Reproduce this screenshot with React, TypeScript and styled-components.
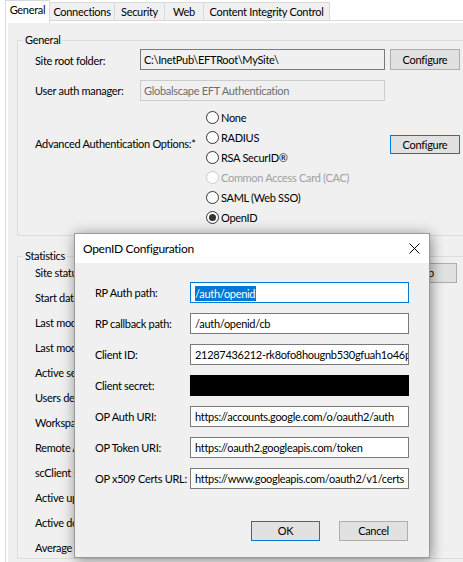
import React from "react";
import styled, { createGlobalStyle, css } from "styled-components";

const GlobalStyle = createGlobalStyle`
  html, body { margin: 0; padding: 0; background: #ffffff; }
  body { font-family: Lato, "Noto Sans", sans-serif; font-size: 11px; color: #000; }
  * { box-sizing: border-box; }
`;

const FONT = `Lato, "Noto Sans", "Liberation Sans", sans-serif`;

const Screen = styled.div`
  position: relative;
  width: 463px;
  height: 562px;
  overflow: hidden;
  background: #ffffff;
  font-family: ${FONT};
  font-size: 11px;
  letter-spacing: -0.3px;
  color: #000;
`;

const TabStrip = styled.div`
  display: flex;
  align-items: flex-end;
  height: 20px;
  padding-left: 5px;
  position: relative;
  z-index: 1;
`;

const Tab = styled.div<{ $active?: boolean; $w: number }>`
  width: ${(p) => p.$w}px;
  height: ${(p) => (p.$active ? 23 : 18)}px;
  margin-bottom: ${(p) => (p.$active ? -3 : 0)}px;
  margin-right: -1px;
  border: 1px solid #d9d9d9;
  border-bottom: none;
  background: ${(p) => (p.$active ? "#ffffff" : "#f0f0f0")};
  display: flex;
  justify-content: center;
  align-items: center;
  padding-bottom: ${(p) => (p.$active ? 4 : 0)}px;
  white-space: nowrap;
  line-height: 16px;
`;

const Panel = styled.div`
  margin-left: 5px;
  width: 620px;
  height: 560px;
  border: 1px solid #d9d9d9;
  padding: 2px;
  background: #ffffff;
`;

const Page = styled.div`
  background: #f0f0f0;
  height: 100%;
  padding: 9px 0 0 9px;
  display: flex;
  flex-direction: column;
`;

const Group = styled.fieldset<{ $gap?: number }>`
  margin: ${(p) => p.$gap ?? 0}px 0 0 0;
  padding: 0 0 0 17px;
  border: 1px solid #dcdcdc;
  width: 600px;
  min-width: 0;
`;

const Legend = styled.legend`
  margin-left: -12px;
  padding: 0 2px;
  line-height: 16px;
  font-size: 11px;
`;

const Row = styled.div<{ $mt: number }>`
  display: flex;
  align-items: center;
  height: 21px;
  margin-top: ${(p) => p.$mt}px;
`;

const Label = styled.div<{ $w: number; $dy?: number }>`
  width: ${(p) => p.$w}px;
  flex: none;
  white-space: nowrap;
  line-height: 16px;
  padding-top: ${(p) => p.$dy ?? 0}px;
`;

type FieldKind = "readonly" | "disabled" | "normal" | "focused" | "secret";

const Field = styled.div<{ $w: number; $kind: FieldKind; $pad?: number }>`
  width: ${(p) => p.$w}px;
  height: 21px;
  flex: none;
  border: 1px solid #7a7a7a;
  background: #ffffff;
  padding: 0 ${(p) => p.$pad ?? 3}px;
  line-height: 19px;
  white-space: nowrap;
  overflow: hidden;
  ${(p) =>
    p.$kind === "readonly" &&
    css`
      background: #f0f0f0;
    `}
  ${(p) =>
    p.$kind === "disabled" &&
    css`
      background: #f0f0f0;
      border-color: #cccccc;
      color: #6d6d6d;
    `}
  ${(p) =>
    p.$kind === "focused" &&
    css`
      border-color: #0078d7;
    `}
  ${(p) =>
    p.$kind === "secret" &&
    css`
      background: #000000;
      border-color: #000000;
    `}
`;

const Selected = styled.span`
  display: inline-block;
  background: #0078d7;
  color: #ffffff;
  line-height: 15px;
  padding: 0 1px 0 0;
  vertical-align: middle;
  margin-top: -2px;
`;

const Button = styled.div<{ $w: number; $default?: boolean; $h?: number }>`
  width: ${(p) => p.$w}px;
  height: ${(p) => p.$h ?? 21}px;
  flex: none;
  border: 1px solid ${(p) => (p.$default ? "#0078d7" : "#adadad")};
  background: #e1e1e1;
  display: flex;
  align-items: center;
  justify-content: center;
  white-space: nowrap;
  line-height: 16px;
`;

const Spacer = styled.div<{ $w: number }>`
  width: ${(p) => p.$w}px;
  flex: none;
`;

const AuthBlock = styled.div`
  display: grid;
  grid-template-columns: 171px 184px 70px;
  margin-top: 6px;
  padding-bottom: 8px;
`;

const AuthLabel = styled.div`
  margin-top: 29px;
  line-height: 16px;
  white-space: nowrap;
`;

const RadioList = styled.div`
  display: flex;
  flex-direction: column;
`;

const RadioRow = styled.div<{ $disabled?: boolean }>`
  display: flex;
  align-items: center;
  height: 20px;
  gap: 2px;
  white-space: nowrap;
  color: ${(p) => (p.$disabled ? "#a0a0a0" : "#000")};
`;

const RadioCircle = styled.span<{ $checked?: boolean; $disabled?: boolean }>`
  width: 13px;
  height: 13px;
  flex: none;
  border-radius: 50%;
  border: 1px solid ${(p) => (p.$disabled ? "#cccccc" : "#333333")};
  background: #ffffff;
  display: flex;
  align-items: center;
  justify-content: center;
  &::after {
    content: "";
    display: ${(p) => (p.$checked ? "block" : "none")};
    width: 7px;
    height: 7px;
    border-radius: 50%;
    background: #333333;
  }
`;

const ButtonCell = styled.div`
  margin-top: 28px;
`;

const StatsList = styled.div`
  display: flex;
  flex-direction: column;
  gap: 5px;
  margin-top: -1px;
`;

const StatRow = styled.div`
  display: flex;
  align-items: center;
  height: 20px;
`;

/* Dialog */
const Dialog = styled.div`
  position: absolute;
  left: 74px;
  top: 233px;
  width: 356px;
  height: 325px;
  border: 1px solid #9a9a9a;
  background: #f0f0f0;
  box-shadow: 0 0 14px rgba(0, 0, 0, 0.28), 3px 4px 10px rgba(0, 0, 0, 0.18);
  display: flex;
  flex-direction: column;
  z-index: 5;
`;

const TitleBar = styled.div`
  height: 29px;
  background: #ffffff;
  display: flex;
  align-items: center;
  justify-content: space-between;
  padding: 0 9px 0 8px;
  flex: none;
`;

const Title = styled.div`
  font-size: 12px;
  line-height: 16px;
  white-space: nowrap;
`;

const DialogBody = styled.div`
  flex: 1;
  padding: 19px 21px 0 20px;
  display: flex;
  flex-direction: column;
  gap: 10px;
`;

const DialogButtons = styled.div`
  display: flex;
  justify-content: flex-end;
  gap: 19px;
  margin-top: 22px;
`;

const CloseIcon = () => (
  <svg width="11" height="11" viewBox="0 0 11 11">
    <path d="M0.5 0.5 L10.5 10.5 M10.5 0.5 L0.5 10.5" stroke="#000" strokeWidth="1" fill="none" />
  </svg>
);

const radios: { label: string; disabled?: boolean; checked?: boolean }[] = [
  { label: "None" },
  { label: "RADIUS" },
  { label: "RSA SecurID®" },
  { label: "Common Access Card (CAC)", disabled: true },
  { label: "SAML (Web SSO)" },
  { label: "OpenID", checked: true },
];

const stats = [
  "Site status:",
  "Start date:",
  "Last modified time:",
  "Last modified by:",
  "Active sessions:",
  "Users defined:",
  "Workspaces:",
  "Remote Agents:",
  "scClient sessions:",
  "Active uploads:",
  "Active downloads:",
  "Average transfer rate:",
];

const dialogFields: { label: string; value?: string; kind: FieldKind }[] = [
  { label: "RP Auth path:", kind: "focused" },
  { label: "RP callback path:", value: "/auth/openid/cb", kind: "normal" },
  { label: "Client ID:", value: "21287436212-rk8ofo8hougnb530gfuah1o46pr", kind: "normal" },
  { label: "Client secret:", value: "", kind: "secret" },
  { label: "OP Auth URI:", value: "https://accounts.google.com/o/oauth2/auth", kind: "normal" },
  { label: "OP Token URI:", value: "https://oauth2.googleapis.com/token", kind: "normal" },
  { label: "OP x509 Certs URL:", value: "https://www.googleapis.com/oauth2/v1/certs", kind: "normal" },
];

export default function App() {
  return (
    <>
      <GlobalStyle />
      <Screen>
        <TabStrip>
          <Tab $active $w={45}>General</Tab>
          <Tab $w={66}>Connections</Tab>
          <Tab $w={51}>Security</Tab>
          <Tab $w={40}>Web</Tab>
          <Tab $w={127}>Content Integrity Control</Tab>
        </TabStrip>
        <Panel>
          <Page>
            <Group>
              <Legend>General</Legend>
              <Row $mt={1}>
                <Label $w={105} $dy={2}>Site root folder:</Label>
                <Field $w={245} $kind="readonly">C:\InetPub\EFTRoot\MySite\</Field>
                <Spacer $w={5} />
                <Button $w={70}>Configure</Button>
              </Row>
              <Row $mt={10}>
                <Label $w={105}>User auth manager:</Label>
                <Field $w={245} $kind="disabled">Globalscape EFT Authentication</Field>
              </Row>
              <AuthBlock>
                <AuthLabel>Advanced Authentication Options:*</AuthLabel>
                <RadioList>
                  {radios.map((r) => (
                    <RadioRow key={r.label} $disabled={r.disabled}>
                      <RadioCircle $checked={r.checked} $disabled={r.disabled} />
                      {r.label}
                    </RadioRow>
                  ))}
                </RadioList>
                <ButtonCell>
                  <Button $w={70} $h={19} $default>Configure</Button>
                </ButtonCell>
              </AuthBlock>
            </Group>
            <Group $gap={12}>
              <Legend>Statistics</Legend>
              <StatsList>
                {stats.map((s, i) => (
                  <StatRow key={s + i}>
                    <Label $w={355}>{s}</Label>
                    {i === 0 && <Button $w={67} $h={20}>Stop</Button>}
                  </StatRow>
                ))}
              </StatsList>
            </Group>
          </Page>
        </Panel>

        <Dialog>
          <TitleBar>
            <Title>OpenID Configuration</Title>
            <CloseIcon />
          </TitleBar>
          <DialogBody>
            {dialogFields.map((f) => (
              <Row key={f.label} $mt={0}>
                <Label $w={95}>{f.label}</Label>
                <Field $w={219} $kind={f.kind} $pad={4}>
                  {f.kind === "focused" ? <Selected>/auth/openid</Selected> : f.value}
                </Field>
              </Row>
            ))}
            <DialogButtons>
              <Button $w={69} $h={20} $default>OK</Button>
              <Button $w={69} $h={20}>Cancel</Button>
            </DialogButtons>
          </DialogBody>
        </Dialog>
      </Screen>
    </>
  );
}
